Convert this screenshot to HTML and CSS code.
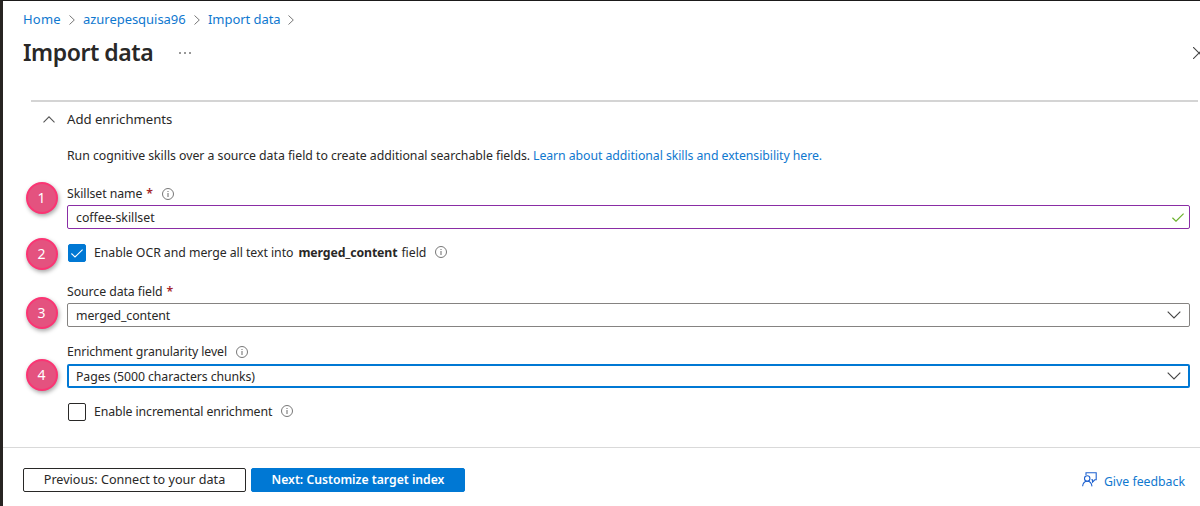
FILE: index.html
```html
<!DOCTYPE html>
<html lang="en">
<head>
<meta charset="utf-8">
<title>Import data</title>
<link rel="stylesheet" href="styles.css">
</head>
<body>
<svg class="defs" aria-hidden="true">
  <symbol id="info" viewBox="0 0 12 12"><circle cx="6" cy="6" r="5.5" fill="none" stroke="#777" stroke-width="1"/><path d="M6 5v4M6 3v1.1" stroke="#777" stroke-width="1.1"/></symbol>
  <symbol id="sep" viewBox="0 0 6 10"><path d="M.5 .5L5.3 5L.5 9.5" fill="none" stroke="#777" stroke-width="1"/></symbol>
  <symbol id="down" viewBox="0 0 14 8"><path d="M.7 .7L7 7L13.3 .7" fill="none" stroke="#444" stroke-width="1.1"/></symbol>
</svg>
<div class="blade">
  <header class="header">
    <nav class="crumbs">
      <a class="t-home">Home</a><svg class="sep"><use href="#sep"/></svg>
      <a class="t-service">azurepesquisa96</a><svg class="sep"><use href="#sep"/></svg>
      <a class="t-import">Import data</a><svg class="sep"><use href="#sep"/></svg>
    </nav>
    <div class="title-row">
      <h1 class="title">Import data</h1>
      <svg class="more" viewBox="0 0 12 2"><path d="M0 1h2M5 1h2M10 1h2" stroke="#777" stroke-width="1.3"/></svg>
      <svg class="close" viewBox="0 0 12 12"><path d="M0 0L12 12M12 0L0 12" stroke="#444" stroke-width="1.1"/></svg>
    </div>
  </header>
  <main class="content">
    <div class="section-head">
      <svg class="up" viewBox="0 0 12 7"><path d="M.5 6.3L6 .8L11.5 6.3" fill="none" stroke="#555" stroke-width="1.1"/></svg>
      <span class="t-section">Add enrichments</span>
    </div>
    <div class="form">
      <p class="description"><span class="t-desc">Run cognitive skills over a source data field to create additional searchable fields.</span><a class="t-learn">Learn about additional skills and extensibility here.</a></p>
      <div class="label"><span class="t-skillset">Skillset name</span><span class="required">*</span><svg class="info"><use href="#info"/></svg></div>
      <div class="field field-edited"><span class="t-coffee">coffee-skillset</span><svg class="valid" viewBox="0 0 12 9"><path d="M.4 4.8L4 8.2L11.6 .6" fill="none" stroke="#6bb12c" stroke-width="1.2"/></svg></div>
      <div class="check-row check-ocr">
        <span class="box box-on"><svg class="tick" viewBox="0 0 12 9"><path d="M.4 4.5L4 8L11.6 .6" fill="none" stroke="#fff" stroke-width="1.1"/></svg></span>
        <span class="t-enable">Enable OCR and merge all text into</span><b class="t-merged">merged_content</b><span class="t-field">field</span><svg class="info"><use href="#info"/></svg>
      </div>
      <div class="label"><span class="t-source">Source data field</span><span class="required">*</span></div>
      <div class="field"><span class="t-content">merged_content</span><svg class="down"><use href="#down"/></svg></div>
      <div class="label label-level"><span class="t-level">Enrichment granularity level</span><svg class="info"><use href="#info"/></svg></div>
      <div class="field field-focus"><span class="t-pages">Pages (5000 characters chunks)</span><svg class="down"><use href="#down"/></svg></div>
      <div class="check-row check-incremental">
        <span class="box"></span><span class="t-incremental">Enable incremental enrichment</span><svg class="info info-raised"><use href="#info"/></svg>
      </div>
    </div>
  </main>
  <footer class="footer">
    <button class="button"><span class="t-prev">Previous: Connect to your data</span></button>
    <button class="button button-primary"><span class="t-next">Next: Customize target index</span></button>
    <a class="feedback">
      <svg class="feedback-icon" viewBox="0 0 15 15"><path d="M4 3V.8h10.2v7h-1.4l-2.3 2.4V7.8H9.3" fill="none" stroke="#1f62cf" stroke-width="1.1"/><circle cx="5.2" cy="6.5" r="2.7" fill="none" stroke="#1f62cf" stroke-width="1.1"/><path d="M.6 14.3C1 11 2.8 9.3 5.3 9.3S9.5 11 10 14.3" fill="none" stroke="#1f62cf" stroke-width="1.1"/></svg>
      <span class="t-feedback">Give feedback</span>
    </a>
  </footer>
</div>
<span class="step step-1">1</span>
<span class="step step-2">2</span>
<span class="step step-3">3</span>
<span class="step step-4">4</span>
</body>
</html>
```
FILE: styles.css
```css
* { box-sizing: border-box; }
body { margin: 0; height: 506px; overflow: hidden; position: relative; background: #fff; color: #292827; font: 12.3px/18px "Noto Sans", sans-serif; }
.defs { position: absolute; width: 0; height: 0; }
svg { display: block; flex: none; }
a { color: #0f78cf; }
span, a, b { white-space: nowrap; }
.blade { height: 506px; border-top: 1px solid #1b1a1a; border-left: 3px solid #272422; display: flex; flex-direction: column; }
.header { height: 99px; padding-left: 20px; }
.crumbs { display: flex; align-items: center; height: 36px; font-size: 13px; }
.t-home { width: 38px; letter-spacing: .2px; }
.t-service { width: 103px; letter-spacing: -.04px; }
.t-import { width: 72px; letter-spacing: -.05px; }
.sep { width: 6px; height: 10px; margin: 1px 8px 0; }
.title-row { display: flex; align-items: center; height: 31px; }
.title { margin: 0; width: 130px; font-size: 23px; font-weight: 600; line-height: 31px; letter-spacing: -.45px; white-space: nowrap; }
.more { width: 12px; height: 2px; margin-left: 26px; }
.close { width: 12px; height: 12px; margin-left: 1002px; }
.content { height: 347px; margin: 0 2px 0 28px; border-top: 2px solid #d4d4d4; }
.section-head { display: flex; align-items: center; height: 35px; padding-left: 12px; font-size: 13.2px; }
.t-section { padding-bottom: 2px; letter-spacing: -.05px; }
.up { width: 12px; height: 7px; margin-right: 12px; }
.form { padding: 0 8px 0 36px; }
.description { display: flex; margin: 0; height: 46px; padding-top: 10px; }
.t-desc { width: 466px; letter-spacing: -.035px; }
.t-learn { letter-spacing: -.065px; }
.label { display: flex; align-items: center; height: 22px; padding-bottom: 1px; letter-spacing: -.07px; }
.required { color: #a4262c; margin-left: 4px; font-size: 12.3px; font-weight: 600; }
.info { width: 12px; height: 12px; margin-left: 9px; }
.field { display: flex; align-items: center; justify-content: space-between; height: 24px; padding: 0 8px; border: 1px solid #858381; border-radius: 2px; }
.field > span { padding-top: 2px; letter-spacing: -.08px; }
.field > .t-coffee { letter-spacing: -.02px; }
.field-edited { border-color: #8a2da5; padding-right: 5px; }
.field-focus { border: 2px solid #0078d4; padding: 0 7px; }
.valid { width: 12px; height: 9px; }
.down { width: 14px; height: 8px; }
.check-row { display: flex; align-items: center; height: 18px; padding-left: 1px; letter-spacing: -.05px; }
.check-row .info { margin-top: -2px; }
.check-ocr { margin: 15px 0 19px; }
.check-incremental { margin-top: 15px; letter-spacing: -.1px; }
.box { display: flex; align-items: center; justify-content: center; width: 18px; height: 18px; margin-right: 8px; border: 1px solid #292827; border-radius: 2px; }
.box-on { background: #0078d4; border-color: #0078d4; }
.tick { width: 12px; height: 9px; }
.t-merged { margin: 0 4px 0 5px; letter-spacing: -.12px; }
.label-level { margin-top: 14px; height: 23px; letter-spacing: -.1px; }
.check-row .info-raised { margin-top: -3px; }
.footer { display: flex; align-items: center; height: 59px; padding: 5px 15px 0 20px; border-top: 1px solid #d9d9d9; }
.button { width: 223px; height: 24px; margin: 0 5px 0 0; padding: 0; border: 1px solid #292827; border-radius: 2px; background: #fff; color: #292827; font: 12.6px/20px "Noto Sans", sans-serif; }
.button-primary { width: 214px; border-color: #0078d4; background: #0078d4; color: #fff; font-size: 12.2px; font-weight: 600; }
.feedback { display: flex; align-items: center; margin-left: auto; padding-top: 5px; }
.feedback-icon { width: 15px; height: 15px; margin: -5px 7px 0 0; }
.step { position: absolute; left: 25.5px; width: 32px; height: 32px; border: 2px solid #fb3473; border-radius: 50%; background: #e4527f; box-shadow: 1px 2px 4px rgba(0, 0, 0, .35); color: #fff; font: 14px/27px "Noto Sans", sans-serif; text-align: center; }
.step-1 { top: 181.5px; }
.step-2 { top: 237.5px; }
.step-3 { top: 296.5px; }
.step-4 { top: 358.5px; }
```
